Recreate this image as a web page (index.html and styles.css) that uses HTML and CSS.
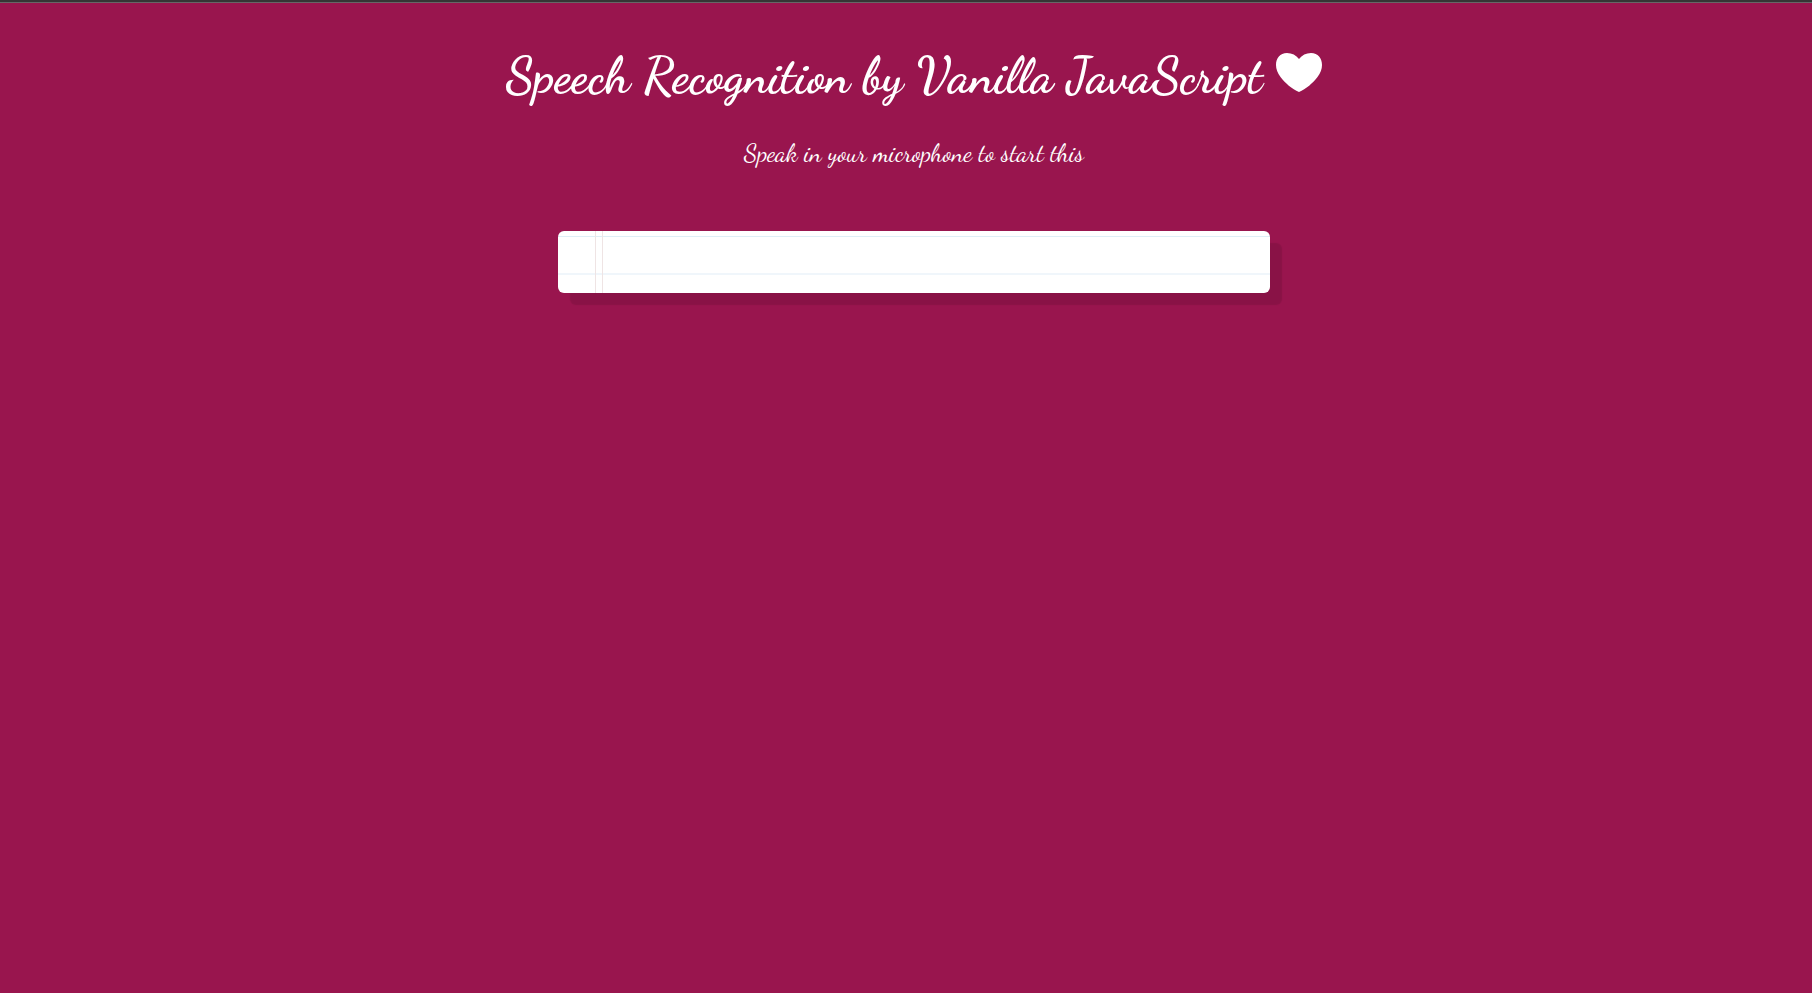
FILE: index.html
```html
<!DOCTYPE html>
<html lang="en">
<head>
<meta charset="utf-8">
<meta name="viewport" content="width=device-width, initial-scale=1">
<title>Speech Recognition</title>
<link rel="stylesheet" href="styles.css">
</head>
<body>
<main class="page">
  <h1 class="title">
    <span>Speech Recognition by Vanilla JavaScript</span>
    <svg class="heart" viewBox="0 0 46 39" aria-hidden="true"><path d="M23 6C20 2 16 0 11 0 4 0 0 5 0 12c0 4 1.500 8 4.500 12C9 30 16 36 23 39c7-3 14-9 18.500-15C44.500 20 46 16 46 12 46 5 42 0 35 0 30 0 26 2 23 6Z"/></svg>
  </h1>
  <p class="subtitle">Speak in your microphone to start this</p>
  <div class="words" contenteditable="true" role="textbox" aria-label="Transcript"></div>
</main>
</body>
</html>
```

FILE: styles.css
```css
* {
  box-sizing: border-box;
}

body {
  margin: 0;
  min-height: 100vh;
  border-top: 2px solid #353535;
  background: #99154e;
  color: #fff;
  font-family: "Dancing Script", "Liberation Serif", cursive;
}

.page {
  display: flex;
  flex-direction: column;
  align-items: center;
  border-top: 1px solid #666;
  padding: 41px 0 40px 16px;
}

.title {
  display: flex;
  align-items: flex-start;
  gap: 14px;
  margin: 0;
  font-size: 50px;
  font-weight: 700;
  line-height: 64px;
}

.heart {
  width: 46px;
  height: 39px;
  margin-top: 9px;
  fill: #fff;
}

.subtitle {
  margin: 29px 0 0;
  font-size: 25px;
  line-height: 32px;
}

.words {
  width: 40%;
  min-width: 320px;
  max-width: 712px;
  min-height: 62px;
  margin-top: 62px;
  padding: 16px 16px 16px 56px;
  border-radius: 6px;
  background:
    linear-gradient(#efe4e4, #efe4e4) 37px 0 / 1px 100% no-repeat,
    linear-gradient(#efe4e4, #efe4e4) 44px 0 / 1px 100% no-repeat,
    linear-gradient(#deeef6, #deeef6) 0 5px / 100% 1px no-repeat,
    linear-gradient(#f0f6fb, #f0f6fb) 0 42px / 100% 2px no-repeat,
    #fff;
  box-shadow: 12px 12px 1px rgba(0, 0, 0, 0.1);
  color: #333;
  font-size: 25px;
  line-height: 30px;
}
```
